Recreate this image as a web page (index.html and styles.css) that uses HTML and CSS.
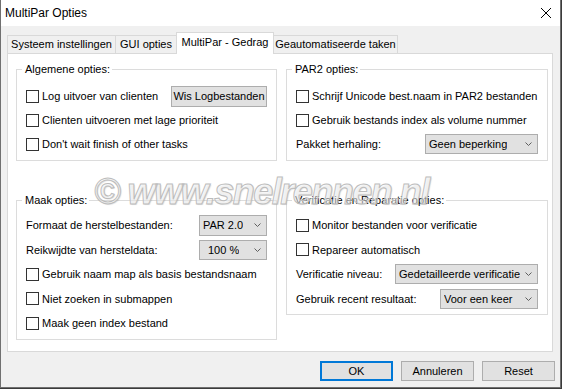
FILE: index.html
```html
<!DOCTYPE html>
<html lang="nl">
  <head>
    <meta charset="UTF-8" />
    <title>MultiPar Opties</title>
    <link rel="stylesheet" href="styles.css">
  </head>
  <body>
    <div class="window">
      <div class="titlebar">
        <span class="title">MultiPar Opties</span>
        <svg class="close" width="10" height="10" viewBox="0 0 10 10">
          <path d="M0 0L10 10M10 0L0 10" stroke="#000" stroke-width="1" fill="none" />
        </svg>
      </div>

      <div class="tabs">
        <div class="tab tab-system">Systeem instellingen</div>
        <div class="tab tab-gui">GUI opties</div>
        <div class="tab tab-behaviour active">MultiPar - Gedrag</div>
        <div class="tab tab-auto">Geautomatiseerde taken</div>
      </div>

      <div class="panel">
        <fieldset class="group">
          <legend>Algemene opties:</legend>
          <div class="rows">
            <div class="row">
              <label class="check"><span class="box"></span>Log uitvoer van clienten</label>
              <button class="btn btn-wis">Wis Logbestanden</button>
            </div>
            <div class="row">
              <label class="check"><span class="box"></span>Clienten uitvoeren met lage prioriteit</label>
            </div>
            <div class="row">
              <label class="check"><span class="box"></span>Don't wait finish of other tasks</label>
            </div>
          </div>
        </fieldset>

        <fieldset class="group">
          <legend>PAR2 opties:</legend>
          <div class="rows">
            <div class="row">
              <label class="check"><span class="box"></span>Schrijf Unicode best.naam in PAR2 bestanden</label>
            </div>
            <div class="row">
              <label class="check"><span class="box"></span>Gebruik bestands index als volume nummer</label>
            </div>
            <div class="row">
              <span class="label">Pakket herhaling:</span>
              <div class="select select-pakket">
                <span class="value">Geen beperking</span>
                <svg class="chevron" width="7" height="4" viewBox="0 0 7 4"><path d="M0.5 0.5L3.5 3.5L6.5 0.5" /></svg>
              </div>
            </div>
          </div>
        </fieldset>

        <fieldset class="group group-low">
          <legend>Maak opties:</legend>
          <div class="rows tall">
            <div class="row">
              <span class="label">Formaat de herstelbestanden:</span>
              <div class="select select-small">
                <span class="value">PAR 2.0</span>
                <svg class="chevron" width="7" height="4" viewBox="0 0 7 4"><path d="M0.5 0.5L3.5 3.5L6.5 0.5" /></svg>
              </div>
            </div>
            <div class="row">
              <span class="label">Reikwijdte van hersteldata:</span>
              <div class="select select-small select-indent">
                <span class="value">100 %</span>
                <svg class="chevron" width="7" height="4" viewBox="0 0 7 4"><path d="M0.5 0.5L3.5 3.5L6.5 0.5" /></svg>
              </div>
            </div>
            <div class="row">
              <label class="check"><span class="box"></span>Gebruik naam map als basis bestandsnaam</label>
            </div>
            <div class="row">
              <label class="check"><span class="box"></span>Niet zoeken in submappen</label>
            </div>
            <div class="row">
              <label class="check"><span class="box"></span>Maak geen index bestand</label>
            </div>
          </div>
        </fieldset>

        <fieldset class="group group-low">
          <legend>Verificatie en Reparatie opties:</legend>
          <div class="rows tall">
            <div class="row">
              <label class="check"><span class="box"></span>Monitor bestanden voor verificatie</label>
            </div>
            <div class="row">
              <label class="check"><span class="box"></span>Repareer automatisch</label>
            </div>
            <div class="row">
              <span class="label">Verificatie niveau:</span>
              <div class="select select-level">
                <span class="value">Gedetailleerde verificatie</span>
                <svg class="chevron" width="7" height="4" viewBox="0 0 7 4"><path d="M0.5 0.5L3.5 3.5L6.5 0.5" /></svg>
              </div>
            </div>
            <div class="row">
              <span class="label">Gebruik recent resultaat:</span>
              <div class="select select-recent">
                <span class="value">Voor een keer</span>
                <svg class="chevron" width="7" height="4" viewBox="0 0 7 4"><path d="M0.5 0.5L3.5 3.5L6.5 0.5" /></svg>
              </div>
            </div>
          </div>
        </fieldset>
      </div>

      <div class="footer">
        <button class="btn btn-footer btn-default">OK</button>
        <button class="btn btn-footer">Annuleren</button>
        <button class="btn btn-footer">Reset</button>
      </div>

      <!-- watermark over the dialog -->
      <div class="watermark">© www.snelrennen.nl</div>
    </div>
  </body>
</html>
```

FILE: styles.css
```css
:root {
  --face: #f0f0f0;
  --edge: #d9d9d9;
  --group: #dcdcdc;
  --control: #e1e1e1;
  --control-border: #adadad;
  --accent: #0078d7;
}

html,
body {
  margin: 0;
  padding: 0;
  width: 562px;
  height: 389px;
  background: #3b3b3b;
  font-family: "Segoe UI", "Liberation Sans", Arial, sans-serif;
  font-size: 11px;
  color: #000;
  overflow: hidden;
}

.window {
  position: relative;
  box-sizing: border-box;
  width: 561px;
  height: 388px;
  background: var(--face);
  border-left: 1px solid #707070;
  border-right: 1px solid #707070;
  border-bottom: 1px solid #707070;
}

.titlebar {
  height: 26px;
  background: #fff;
  display: flex;
  align-items: center;
  justify-content: space-between;
  padding: 0 9px 0 4px;
  font-size: 12px;
}

.close {
  display: block;
}

/* tabs */
.tabs {
  display: flex;
  align-items: flex-end;
  margin: 6px 0 0 6px;
}

.tab {
  box-sizing: border-box;
  height: 18px;
  border: 1px solid var(--edge);
  border-bottom: none;
  background: var(--face);
  text-align: center;
  line-height: 17px;
  margin-left: -1px;
  white-space: nowrap;
}

.tab-system {
  width: 109px;
  margin-left: 0;
}

.tab-gui {
  width: 62px;
}

.tab.active {
  position: relative;
  z-index: 1;
  width: 98px;
  height: 22px;
  margin-bottom: -1px;
  background: #fff;
  line-height: 19px;
}

.tab-auto {
  width: 125px;
}

.panel {
  box-sizing: border-box;
  width: 546px;
  height: 299px;
  margin-left: 6px;
  background: #fff;
  border: 1px solid var(--edge);
  display: grid;
  grid-template-columns: 261px 262px;
  column-gap: 9px;
  row-gap: 32px;
  align-items: start;
  align-content: start;
  padding: 8px 0 0 8px;
}

.group {
  margin: 0;
  min-width: 0;
  border: 1px solid var(--group);
  padding: 0 9px 4px 5px;
}

.group legend {
  padding: 0 2px 0 3px;
  line-height: 14px;
}

.rows {
  padding: 8px 0 0 4px;
}

.rows.tall {
  padding-top: 6px;
}

.group-low {
  padding-bottom: 3px;
}

.row {
  height: 24px;
  display: flex;
  align-items: center;
}

.rows.tall .row {
  height: 24.5px;
}

.check {
  display: flex;
  align-items: center;
  white-space: nowrap;
}

.box {
  box-sizing: border-box;
  width: 13px;
  height: 13px;
  border: 1px solid #333;
  background: #fff;
  margin-right: 3px;
}

.label {
  white-space: nowrap;
}

/* buttons and combo boxes */
.btn {
  box-sizing: border-box;
  font: inherit;
  color: #000;
  background: var(--control);
  border: 1px solid var(--control-border);
  padding: 0;
  margin: 0;
  white-space: nowrap;
}

.btn-wis {
  margin-left: auto;
  width: 96px;
  height: 21px;
}

.select {
  box-sizing: border-box;
  margin-left: auto;
  height: 21px;
  display: flex;
  align-items: center;
  background: var(--control);
  border: 1px solid var(--control-border);
  padding-left: 3px;
  white-space: nowrap;
}

.value {
  min-width: 0;
  overflow: hidden;
}

.chevron {
  flex: none;
  margin-left: auto;
  margin-right: 5px;
  fill: none;
  stroke: #5f5f5f;
  stroke-width: 1;
}

.select-pakket {
  width: 113px;
  height: 20px;
}

.select-small {
  width: 68px;
}

.select-indent {
  padding-left: 8px;
  height: 20px;
}

.select-level {
  width: 143px;
  height: 20px;
}

.select-recent {
  width: 98px;
  height: 20px;
}

.footer {
  display: flex;
  justify-content: flex-end;
  gap: 8px;
  margin-top: 9px;
  padding-right: 5px;
}

.btn-footer {
  width: 73px;
  height: 20px;
}

.btn-default {
  border: 2px solid var(--accent);
}

.watermark {
  position: absolute;
  left: 93px;
  top: 174px;
  font-family: "Liberation Sans", Arial, sans-serif;
  font-size: 36px;
  line-height: 36px;
  font-weight: bold;
  font-style: italic;
  letter-spacing: -1.5px;
  white-space: nowrap;
  color: rgba(255, 255, 255, 0.55);
  -webkit-text-stroke: 1px #bcbcbc;
  text-shadow: 1px 1px 1px rgba(0, 0, 0, 0.12);
  pointer-events: none;
}
```
